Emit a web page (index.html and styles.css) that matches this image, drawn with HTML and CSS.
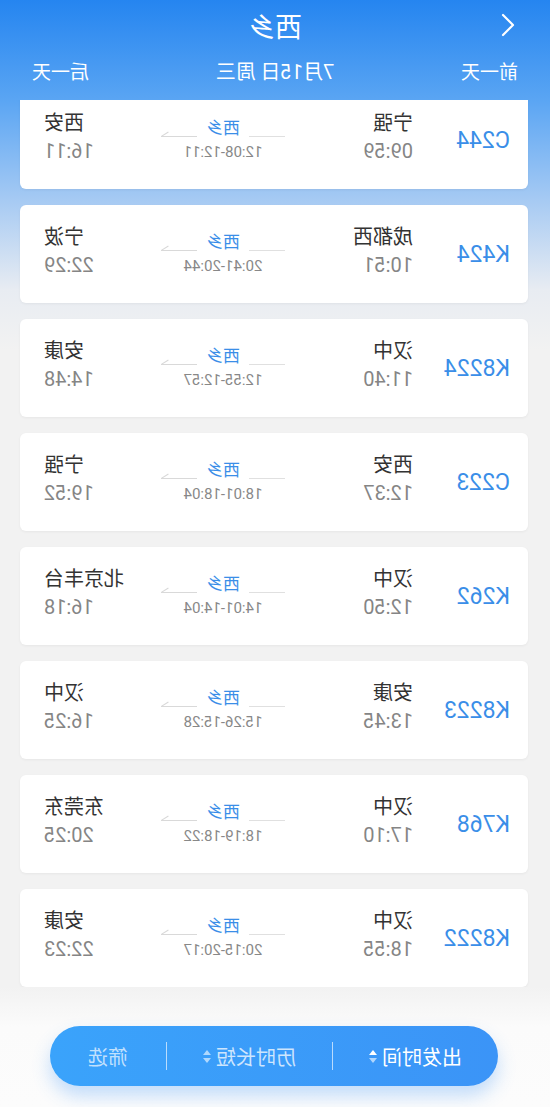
FILE: index.html
```html
<!DOCTYPE html>
<html lang="zh-CN">
<head>
    <meta charset="UTF-8">
    <meta name="viewport" content="width=device-width, initial-scale=1.0">
    <title>西乡 车次列表</title>
    <link rel="stylesheet" href="styles.css">
</head>
<body>
    <div class="app">
        <div class="header">
            <div class="title-row">
                <span class="back">
                    <svg width="16" height="24" viewBox="0 0 16 24"><polyline points="13,2 3,12 13,22" fill="none" stroke="#fff" stroke-width="2.2" stroke-linecap="round" stroke-linejoin="round"/></svg>
                </span>
                <h1>西乡</h1>
                <span></span>
            </div>
            <div class="date-row">
                <span>前一天</span>
                <span>7月15日 周三</span>
                <span>后一天</span>
            </div>
        </div>

        <div class="list" id="train_list"></div>

        <div class="footer">
            <div class="sort-bar">
                <div class="sort-item active">出发时间<span class="arrows up"></span></div>
                <div class="sort-item">历时长短<span class="arrows"></span></div>
                <div class="sort-item last">筛选</div>
            </div>
        </div>
    </div>

    <script>
        const trains = [
            { no: "C244", from: "宁强", dep: "09:59", to: "西安", arr: "16:11", stop: "12:08-12:11" },
            { no: "K424", from: "成都西", dep: "10:51", to: "宁波", arr: "22:29", stop: "20:41-20:44" },
            { no: "K8224", from: "汉中", dep: "11:40", to: "安康", arr: "14:48", stop: "12:55-12:57" },
            { no: "C223", from: "西安", dep: "12:37", to: "宁强", arr: "19:52", stop: "18:01-18:04" },
            { no: "K262", from: "汉中", dep: "12:50", to: "北京丰台", arr: "16:18", stop: "14:01-14:04" },
            { no: "K8223", from: "安康", dep: "13:45", to: "汉中", arr: "16:25", stop: "15:26-15:28" },
            { no: "K768", from: "汉中", dep: "17:10", to: "东莞东", arr: "20:25", stop: "18:19-18:22" },
            { no: "K8222", from: "汉中", dep: "18:55", to: "安康", arr: "22:23", stop: "20:15-20:17" }
        ];

        const list = document.getElementById("train_list");

        trains.forEach(function(t) {
            const card = document.createElement("div");
            card.className = "card";
            card.innerHTML = `
                <div class="train-no">${t.no}</div>
                <div class="end">
                    <div class="station">${t.from}</div>
                    <div class="time">${t.dep}</div>
                </div>
                <div class="middle">
                    <div class="via">
                        <span class="seg"></span>
                        <span class="via-name">西乡</span>
                        <svg class="seg arrow" height="8" viewBox="0 0 34 8" preserveAspectRatio="none"><path d="M0 7.5 H34 L27 3" fill="none" stroke="#d9d9d9" stroke-width="1"/></svg>
                    </div>
                    <div class="stop">${t.stop}</div>
                </div>
                <div class="end right">
                    <div class="station">${t.to}</div>
                    <div class="time">${t.arr}</div>
                </div>
            `;
            list.appendChild(card);
        });
    </script>
</body>
</html>
```

FILE: styles.css
```css
body {
    margin: 0;
    font-family: "Roboto", "Noto Sans CJK SC", sans-serif;
}

/* the screenshot is shown mirrored */
.app {
    width: 550px;
    height: 1107px;
    overflow: hidden;
    transform: scaleX(-1);
    display: flex;
    flex-direction: column;
    background: linear-gradient(180deg, #2585f0 0, #5aa5f3 100px, #a6caf3 200px, #e8ecf2 290px, #f2f2f2 350px, #f2f2f2 100%);
}

.header {
    position: relative;
    z-index: 1;
    height: 100px;
    color: #fff;
    background: linear-gradient(180deg, #2585f0 0, #5aa5f3 100%);
}

.title-row {
    height: 50px;
    display: grid;
    grid-template-columns: 80px 1fr 80px;
    align-items: center;
}

.back {
    padding-left: 34px;
    display: flex;
    align-items: center;
}

h1 {
    margin: 0;
    text-align: center;
    font-size: 27px;
    font-weight: 400;
}

.date-row {
    height: 40px;
    padding: 0 32px;
    display: flex;
    justify-content: space-between;
    align-items: center;
    font-size: 19px;
}

.date-row span:nth-child(2) {
    font-size: 20px;
}

.list {
    margin-top: -9px;
    padding: 0 20px 0 22px;
    display: flex;
    flex-direction: column;
    gap: 16px;
}

.card {
    height: 98px;
    box-sizing: border-box;
    padding: 18px 24px 0 18px;
    background: #fff;
    border-radius: 6px;
    box-shadow: 0 1px 3px rgba(0, 0, 0, 0.05);
    display: grid;
    grid-template-columns: 97px 128px 124px 1fr;
    align-items: start;
}

.train-no {
    align-self: center;
    margin-top: -18px;
    color: #3a8ee8;
    font-size: 23px;
}

.station {
    font-size: 20px;
    line-height: 28px;
    color: #333;
}

.time {
    font-size: 20px;
    line-height: 28px;
    color: #858585;
}

.right {
    text-align: right;
}

.middle {
    padding-top: 8px;
    display: flex;
    flex-direction: column;
    align-items: center;
}

.via {
    width: 124px;
    display: flex;
    align-items: flex-end;
}

.seg {
    flex: 1;
    height: 1px;
    margin-bottom: 2px;
    background: #e0e0e0;
}

.seg.arrow {
    height: 8px;
    background: none;
}

.via-name {
    padding: 0 9px;
    font-size: 17px;
    line-height: 22px;
    color: #3a8ee8;
}

.stop {
    margin-top: 3px;
    font-size: 15px;
    line-height: 20px;
    color: #888;
}

.footer {
    flex: 1;
    padding-top: 39px;
    background: linear-gradient(180deg, #f2f2f2 0, #fbfbfb 40px, #fcfcfc 100%);
}

.sort-bar {
    margin-left: 52px;
    width: 448px;
    height: 60px;
    border-radius: 30px;
    background: linear-gradient(90deg, #3b94f7 0, #3aa3fb 100%);
    box-shadow: 0 10px 18px rgba(64, 150, 250, 0.3);
    display: flex;
    align-items: center;
}

.sort-item {
    width: 165px;
    height: 28px;
    display: flex;
    justify-content: center;
    align-items: center;
    font-size: 20px;
    color: rgba(255, 255, 255, 0.75);
    border-right: 1px solid rgba(255, 255, 255, 0.65);
}

.sort-item.active {
    color: #fff;
}

.sort-item.last {
    flex: 1;
    border-right: none;
    color: rgba(255, 255, 255, 0.7);
}

.arrows {
    position: relative;
    width: 8px;
    height: 13px;
    margin-left: 5px;
}

.arrows::before,
.arrows::after {
    content: "";
    position: absolute;
    left: 0;
    border-left: 4px solid transparent;
    border-right: 4px solid transparent;
}

.arrows::before {
    top: 0;
    border-bottom: 5px solid rgba(255, 255, 255, 0.6);
}

.arrows::after {
    bottom: 0;
    border-top: 5px solid rgba(255, 255, 255, 0.6);
}

.arrows.up::before {
    border-bottom-color: #fff;
}
```
